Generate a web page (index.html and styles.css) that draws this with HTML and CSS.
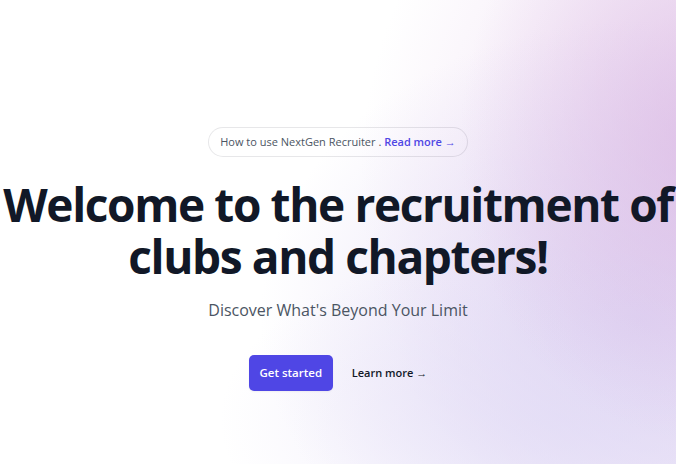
FILE: index.html
```html
<!DOCTYPE html>
<html lang="en">
<head>
<meta charset="utf-8">
<title>NextGen Recruiter</title>
<link rel="stylesheet" href="styles.css">
</head>
<body>
<main class="hero">
  <div class="hero-inner">
    <div class="badge">How to use NextGen Recruiter . <a class="badge-link" href="#">Read more <span aria-hidden="true">→</span></a></div>
    <h1 class="title">Welcome to the recruitment of<br>clubs and chapters!</h1>
    <p class="lead">Discover What's Beyond Your Limit</p>
    <div class="actions">
      <a class="btn-primary" href="#">Get started</a>
      <a class="btn-link" href="#">Learn more <span aria-hidden="true">→</span></a>
    </div>
  </div>
</main>
</body>
</html>
```

FILE: styles.css
```css
html, body {
  margin: 0;
  padding: 0;
}
body {
  font-family: "Open Sans", "Noto Sans", sans-serif;
  background: #ffffff;
  overflow: hidden;
}
.hero {
  height: 464px;
  background:
    radial-gradient(ellipse 240px 300px at 700px 140px, rgba(220,186,228,0.7), rgba(220,186,228,0) 100%),
    radial-gradient(ellipse 340px 180px at 560px 420px, rgba(226,220,246,0.7), rgba(226,220,246,0) 100%),
    radial-gradient(ellipse 380px 300px at 640px 320px, rgba(218,208,242,0.85), rgba(218,208,242,0) 100%),
    radial-gradient(ellipse 380px 420px at 740px 180px, rgba(232,210,238,0.9), rgba(232,210,238,0) 100%),
    #ffffff;
  display: flex;
  justify-content: center;
}
.hero-inner {
  display: flex;
  flex-direction: column;
  align-items: center;
  padding-top: 128px;
}
.badge {
  height: 28px;
  box-sizing: border-box;
  padding: 0 11px;
  border-radius: 999px;
  box-shadow: 0 0 0 1px rgba(17,24,39,0.1);
  font-size: 11px;
  line-height: 28px;
  color: #4b5563;
  white-space: nowrap;
}
.badge-link {
  color: #4f46e5;
  font-weight: 600;
  text-decoration: none;
}
.title {
  margin: 22px 0 0;
  font-size: 46px;
  line-height: 52px;
  font-weight: 700;
  letter-spacing: -0.03em;
  color: #111827;
  text-align: center;
  white-space: nowrap;
}
.lead {
  margin: 14px 0 0;
  font-size: 16px;
  line-height: 28px;
  color: #4b5563;
}
.actions {
  margin-top: 31px;
  display: flex;
  align-items: center;
  gap: 19px;
}
.btn-primary {
  display: block;
  width: 84px;
  height: 36px;
  box-sizing: border-box;
  border-radius: 5px;
  background: #4f46e5;
  color: #ffffff;
  font-size: 11.5px;
  font-weight: 600;
  line-height: 36px;
  text-align: center;
  text-decoration: none;
  box-shadow: 0 1px 2px rgba(0,0,0,0.05);
}
.btn-link {
  color: #111827;
  font-size: 11px;
  font-weight: 600;
  line-height: 24px;
  text-decoration: none;
}
```
